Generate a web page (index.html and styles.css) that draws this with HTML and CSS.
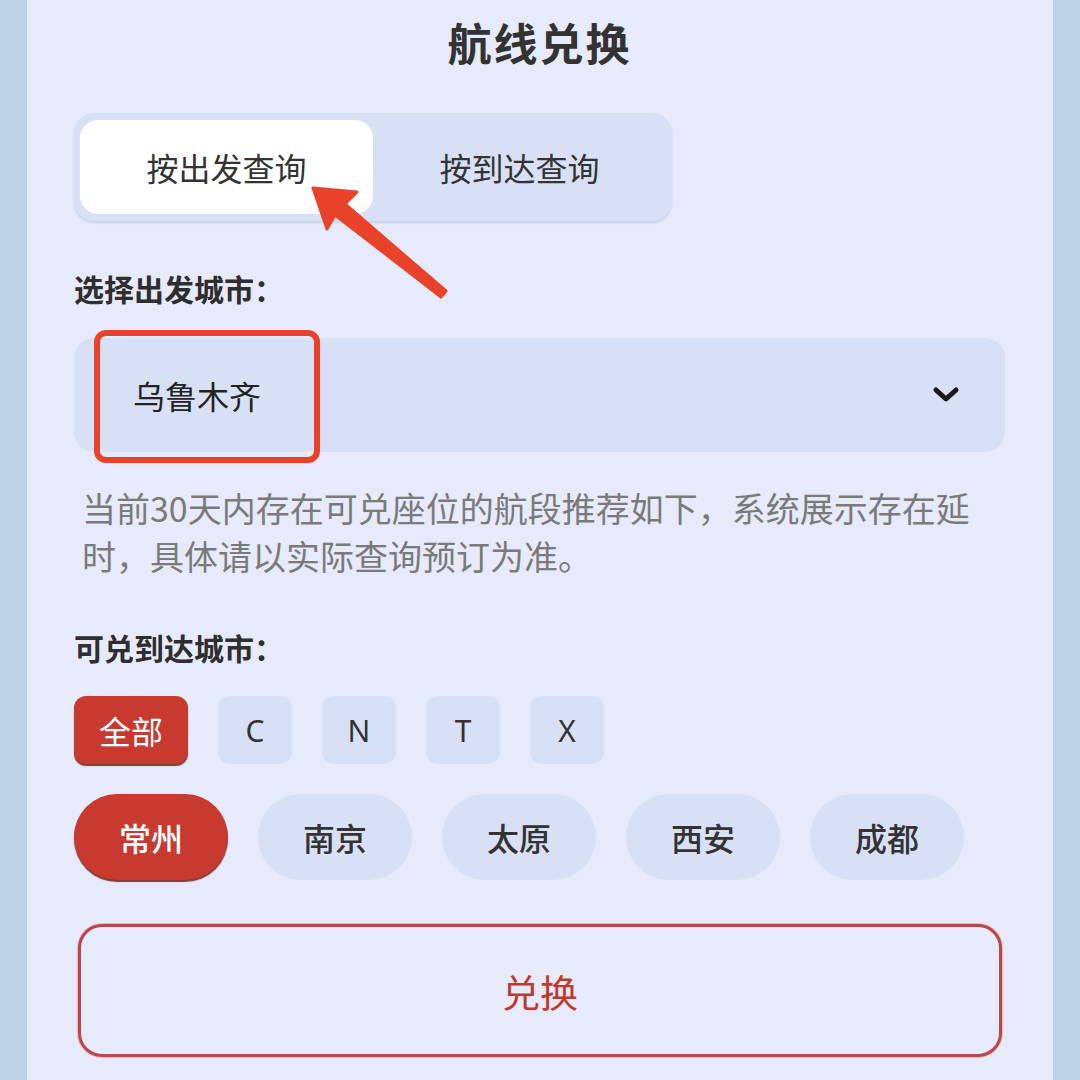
FILE: index.html
```html
<!DOCTYPE html>
<html>
<head>
    <meta charset="utf-8">
    <meta name="viewport" content="width=device-width, initial-scale=1">
    <title>航线兑换</title>
    <link rel="stylesheet" href="styles.css">
</head>

<body>
    <div id="page">
        <div class="side"></div>

        <div id="panel">
            <h1 class="title">航线兑换</h1>

            <div class="segment">
                <div class="seg-item active">按出发查询</div>
                <div class="seg-item">按到达查询</div>
            </div>

            <div class="label">选择出发城市：</div>

            <div class="select">
                <span class="select-value">乌鲁木齐</span>
                <svg class="chevron" width="28" height="18" viewBox="0 0 28 18">
                    <path d="M4 4 L14 13 L24 4" fill="none" stroke="#1a1a1a" stroke-width="5" stroke-linecap="round" stroke-linejoin="round"/>
                </svg>
            </div>

            <p class="note">当前30天内存在可兑座位的航段推荐如下，系统展示存在延时，具体请以实际查询预订为准。</p>

            <div class="label label-arrive">可兑到达城市：</div>

            <div class="letters">
                <div class="chip chip-all active">全部</div>
                <div class="chip">C</div>
                <div class="chip">N</div>
                <div class="chip">T</div>
                <div class="chip">X</div>
            </div>

            <div class="cities">
                <div class="pill active">常州</div>
                <div class="pill">南京</div>
                <div class="pill">太原</div>
                <div class="pill">西安</div>
                <div class="pill">成都</div>
            </div>

            <button class="exchange">兑换</button>
        </div>

        <div class="side"></div>
    </div>

    <!-- 标注：红色箭头和红框 -->
    <svg id="marks" width="1080" height="1080" viewBox="0 0 1080 1080">
        <polygon points="313,188 357,192 345,204 446,291 441,297 335,215 327,229"
                 fill="#e8432a" stroke="#e8432a" stroke-width="3" stroke-linejoin="round"/>
        <rect x="97" y="333" width="220" height="127" rx="9" fill="none" stroke="#e8432a" stroke-width="6"/>
    </svg>
</body>
</html>
```

FILE: styles.css
```css
body, html {
    margin: 0;
    padding: 0;
    width: 100%;
    height: 100%;
    overflow: hidden;
    font-family: "Noto Sans CJK SC", "Noto Sans", sans-serif;
    color: #333;}

#page {
    display: flex;
    height: 1080px;}

.side {
    width: 27px;
    flex-shrink: 0;
    background-color: #bdd1e6;}

#panel {
    flex: 1;
    display: flex;
    flex-direction: column;
    align-items: flex-start;
    padding: 0 48px 0 47px;
    background-color: #e6eafb;}

.title {
    align-self: stretch;
    margin: 0;
    padding-top: 11px;
    font-size: 44px;
    line-height: 62px;
    font-weight: 700;
    letter-spacing: 2px;
    text-align: center;
    color: #333;}

.segment {
    display: flex;
    width: 586px;
    margin-top: 40px;
    padding: 7px 6px;
    border-radius: 20px;
    background-color: #d8e0f6;
    box-shadow: 0 2px 2px rgba(150, 165, 210, 0.35);}

.seg-item {
    flex: 1;
    height: 94px;
    display: flex;
    align-items: center;
    justify-content: center;
    font-size: 32px;
    color: #333;
    border-radius: 18px;}

.seg-item.active {
    background-color: #fff;}

.label {
    margin-top: 47px;
    font-size: 30px;
    line-height: 40px;
    font-weight: 700;
    color: #2e2e2e;}

.select {
    align-self: stretch;
    height: 114px;
    margin-top: 30px;
    display: flex;
    align-items: center;
    justify-content: space-between;
    padding: 0 45px 0 59px;
    border-radius: 20px;
    background-color: #d8e0f6;}

.select-value {
    font-size: 32px;
    color: #222;}

.note {
    align-self: stretch;
    margin: 32px 0 0;
    padding: 0 20px 0 8px;
    font-size: 34px;
    line-height: 48px;
    color: #7a7a7a;}

.label-arrive {
    margin-top: 47px;}

.letters {
    display: flex;
    gap: 30px;
    margin-top: 29px;}

.chip {
    width: 74px;
    height: 68px;
    display: flex;
    align-items: center;
    justify-content: center;
    border-radius: 12px;
    background-color: #d8e0f6;
    font-family: "Noto Sans", "Noto Sans CJK SC", sans-serif;
    font-size: 30px;
    color: #333;}

.chip-all {
    width: 114px;
    font-family: "Noto Sans CJK SC", sans-serif;
    font-size: 32px;}

.chip.active, .pill.active {
    background-color: #c8392f;
    color: #fff;
    box-shadow: 0 2px 1px #7d3b3b;}

.cities {
    display: flex;
    gap: 30px;
    margin-top: 30px;}

.pill {
    width: 154px;
    height: 86px;
    display: flex;
    align-items: center;
    justify-content: center;
    border-radius: 43px;
    background-color: #d8e0f6;
    font-size: 32px;
    font-weight: 500;
    color: #333;}

.exchange {
    align-self: stretch;
    height: 133px;
    margin: 44px 3px 0 4px;
    border: 3px solid #b9484a;
    border-radius: 24px;
    background-color: #e6eafb;
    box-shadow: 0 0 0 1px #f3b3b3;
    font-family: "Noto Sans CJK SC", sans-serif;
    font-size: 38px;
    color: #c0392b;
    cursor: pointer;}

#marks {
    position: absolute;
    top: 0;
    left: 0;
    pointer-events: none;}
```
